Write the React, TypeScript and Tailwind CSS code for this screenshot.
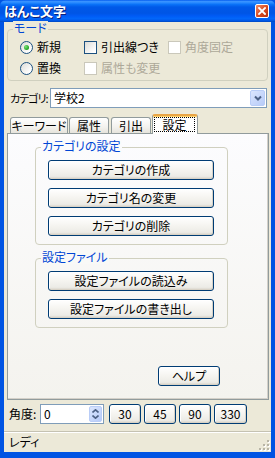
import React from "react";

const jp = "font-['Noto_Sans_CJK_JP',sans-serif] [font-feature-settings:'palt']";

function XpButton({ children, className = "" }: { children: React.ReactNode; className?: string }) {
  return (
    <button
      className={
        "flex h-[20px] items-center justify-center rounded-[3px] border border-[#003c74] bg-[linear-gradient(180deg,#ffffff_0%,#f6f5f1_45%,#ecebe6_85%,#d6d0c5_100%)] text-[12px] leading-[14px] text-black shadow-[inset_-1px_-1px_0_#d8d2c6,inset_1px_1px_0_#ffffff] " +
        className
      }
    >
      {children}
    </button>
  );
}

function GroupBox({
  label,
  labelBg,
  className = "",
  children,
}: {
  label: string;
  labelBg: string;
  className?: string;
  children?: React.ReactNode;
}) {
  return (
    <div className={"relative rounded-[4px] border border-[#d0d0bf] " + className}>
      <span className={"absolute left-[5px] top-[-9px] px-[1px] text-[12px] leading-[14px] text-[#0046d5] " + labelBg}>
        {label}
      </span>
      {children}
    </div>
  );
}

function Radio({ checked, label }: { checked?: boolean; label: string }) {
  return (
    <div className="flex h-[14px] items-center gap-[4px]">
      <span className="flex h-[13px] w-[13px] items-center justify-center rounded-full border border-[#1c5180] bg-[linear-gradient(135deg,#dcdcd7,#ffffff_80%)]">
        {checked && (
          <span className="h-[5px] w-[5px] rounded-full bg-[radial-gradient(circle_at_35%_35%,#7be27a,#21a121_70%)]" />
        )}
      </span>
      <span className="text-[12px] leading-[14px] text-black">{label}</span>
    </div>
  );
}

function Check({ label, disabled }: { label: string; disabled?: boolean }) {
  return (
    <div className="flex h-[14px] items-center gap-[4px]">
      <span
        className={
          disabled
            ? "h-[13px] w-[13px] border border-[#cac8bb] bg-white"
            : "h-[13px] w-[13px] border border-[#1c5180] bg-[linear-gradient(135deg,#dcdcd7,#ffffff_85%)]"
        }
      />
      <span className={disabled ? "text-[12px] leading-[14px] text-[#aca899]" : "text-[12px] leading-[14px] text-black"}>
        {label}
      </span>
    </div>
  );
}

function Tab({ label, className = "" }: { label: string; className?: string }) {
  return (
    <div
      className={
        "flex h-[16px] items-center justify-center rounded-t-[3px] border border-b-0 border-[#919b9c] bg-[linear-gradient(180deg,#ffffff,#f3f2ee_60%,#e6e4dc)] text-[12px] leading-[14px] text-black " +
        className
      }
    >
      {label}
    </div>
  );
}

export default function App() {
  return (
    <div className={"flex h-[458px] w-[275px] flex-col bg-[#0054e3] " + jp}>
      {/* title bar */}
      <div className="flex h-[22px] shrink-0 items-center justify-between rounded-t-[6px] bg-[linear-gradient(180deg,#0058ee_0%,#3a93ff_6%,#2a8bff_12%,#0a72f8_20%,#0059e8_32%,#0055e5_60%,#005bf5_72%,#0266fa_84%,#005ced_92%,#0048c0_100%)] pl-[4px] pr-[6px]">
        <span className="text-[13px] font-bold leading-[14px] text-white [text-shadow:1px_1px_0_#0a1f7a]">
          はんこ文字
        </span>
        <span className="flex h-[14px] w-[14px] items-center justify-center rounded-[2px] border border-white bg-[linear-gradient(135deg,#f08a66,#d8491f_55%,#b8320f)]">
          <svg width="8" height="8" viewBox="0 0 8 8">
            <path d="M1 1 L7 7 M7 1 L1 7" stroke="#ffffff" strokeWidth="1.8" strokeLinecap="square" />
          </svg>
        </span>
      </div>

      {/* client area */}
      <div className="mx-[4px] mb-[6px] flex flex-1 flex-col bg-[#ece9d8]">
        {/* mode group */}
        <GroupBox label="モード" labelBg="bg-[#ece9d8]" className="ml-[3px] mt-[7px] h-[52px] w-[261px]">
          <div className="grid grid-cols-[64px_84px_auto] gap-y-[7px] pl-[12px] pt-[10px]">
            <Radio checked label="新規" />
            <Check label="引出線つき" />
            <Check label="角度固定" disabled />
            <Radio label="置換" />
            <Check label="属性も変更" disabled />
          </div>
        </GroupBox>

        {/* category */}
        <div className="mt-[7px] flex h-[20px] items-center">
          <span className="ml-[6px] w-[40px] shrink-0 whitespace-nowrap text-[11px] leading-[14px] tracking-[-1px] text-black">
            カテゴリ:
          </span>
          <div className="flex h-[20px] w-[217px] shrink-0 items-center border border-[#7f9db9] bg-white p-[1px]">
            <span className="flex-1 pl-[2px] text-[12px] leading-[14px] text-black">学校2</span>
            <span className="flex h-[16px] w-[15px] items-center justify-center rounded-[2px] border border-[#b9cdf7] bg-[linear-gradient(135deg,#dbe6fe,#b7cbf8)]">
              <svg width="8" height="6" viewBox="0 0 8 6">
                <path d="M1 1.5 L4 4.5 L7 1.5" stroke="#4d6185" strokeWidth="2" fill="none" />
              </svg>
            </span>
          </div>
        </div>

        {/* tabs */}
        <div className="ml-[6px] mt-[6px] flex h-[19px] items-end">
          <Tab label="キーワード" className="mr-[1px] w-[58px]" />
          <Tab label="属性" className="mr-[2px] w-[40px]" />
          <Tab label="引出" className="mr-[1px] w-[40px]" />
          <div className="relative z-10 -mb-[1px] flex h-[20px] w-[46px] items-start rounded-t-[3px] border-x border-t-2 border-x-[#919b9c] border-t-[#e8a545] bg-white pl-[1px] pt-[1px] shadow-[inset_0_1px_0_#ffd36b]">
            <span className="flex h-[15px] w-[41px] items-center justify-center border border-dotted border-black text-[12px] leading-[14px] text-black">
              設定
            </span>
          </div>
        </div>

        {/* tab panel */}
        <div className="ml-[3px] flex h-[267px] w-[262px] flex-col border border-[#919b9c] bg-[linear-gradient(180deg,#fcfcfe,#f4f3ee)] shadow-[inset_-1px_-1px_0_#d4d0c8]">
          <GroupBox label="カテゴリの設定" labelBg="bg-[#fbfbfc]" className="ml-[27px] mt-[13px] w-[193px]">
            <div className="flex flex-col gap-[8px] pb-[8px] pl-[12px] pt-[12px]">
              <XpButton className="w-[166px]">カテゴリの作成</XpButton>
              <XpButton className="w-[166px]">カテゴリ名の変更</XpButton>
              <XpButton className="w-[166px]">カテゴリの削除</XpButton>
            </div>
          </GroupBox>
          <GroupBox label="設定ファイル" labelBg="bg-[#f9f9f7]" className="ml-[27px] mt-[13px] w-[193px]">
            <div className="flex flex-col gap-[8px] pb-[8px] pl-[12px] pt-[12px]">
              <XpButton className="w-[166px]">設定ファイルの読込み</XpButton>
              <XpButton className="w-[166px]">設定ファイルの書き出し</XpButton>
            </div>
          </GroupBox>
          <XpButton className="mb-[13px] ml-[150px] mt-auto w-[62px]">ヘルプ</XpButton>
        </div>

        {/* angle row */}
        <div className="mt-[4px] flex h-[20px] items-center">
          <span className="ml-[5px] w-[31px] shrink-0 whitespace-nowrap text-[12px] leading-[14px] text-black">角度:</span>
          <div className="flex h-[20px] w-[64px] items-center border border-[#7f9db9] bg-white p-[1px]">
            <span className="flex-1 pl-[2px] text-[12px] leading-[14px] text-black">0</span>
            <span className="flex h-[16px] w-[13px] flex-col items-center justify-center gap-[2px] rounded-[2px] border border-[#b9cdf7] bg-[linear-gradient(135deg,#dbe6fe,#b7cbf8)]">
              <svg width="7" height="4" viewBox="0 0 7 4">
                <path d="M0.5 3.5 L3.5 0.8 L6.5 3.5" stroke="#4d6185" strokeWidth="1.6" fill="none" />
              </svg>
              <svg width="7" height="4" viewBox="0 0 7 4">
                <path d="M0.5 0.5 L3.5 3.2 L6.5 0.5" stroke="#4d6185" strokeWidth="1.6" fill="none" />
              </svg>
            </span>
          </div>
          <div className="ml-[5px] flex gap-[3px]">
            <XpButton className="w-[32px]">30</XpButton>
            <XpButton className="w-[32px]">45</XpButton>
            <XpButton className="w-[32px]">90</XpButton>
            <XpButton className="w-[33px]">330</XpButton>
          </div>
        </div>

        {/* status bar */}
        <div className="mt-[7px] flex flex-1 items-center justify-between border-t border-[#c5c2b2] pl-[5px] shadow-[inset_0_1px_0_#ffffff]">
          <span className="text-[12px] leading-[14px] text-black">レディ</span>
          <svg width="12" height="12" viewBox="0 0 12 12" className="mr-[1px] mt-[6px]">
            {[
              [9, 1],
              [5, 5],
              [9, 5],
              [1, 9],
              [5, 9],
              [9, 9],
            ].map(([x, y]) => (
              <g key={`${x}-${y}`}>
                <rect x={x + 1} y={y + 1} width="2" height="2" fill="#ffffff" />
                <rect x={x} y={y} width="2" height="2" fill="#b8b5a6" />
              </g>
            ))}
          </svg>
        </div>
      </div>
    </div>
  );
}
